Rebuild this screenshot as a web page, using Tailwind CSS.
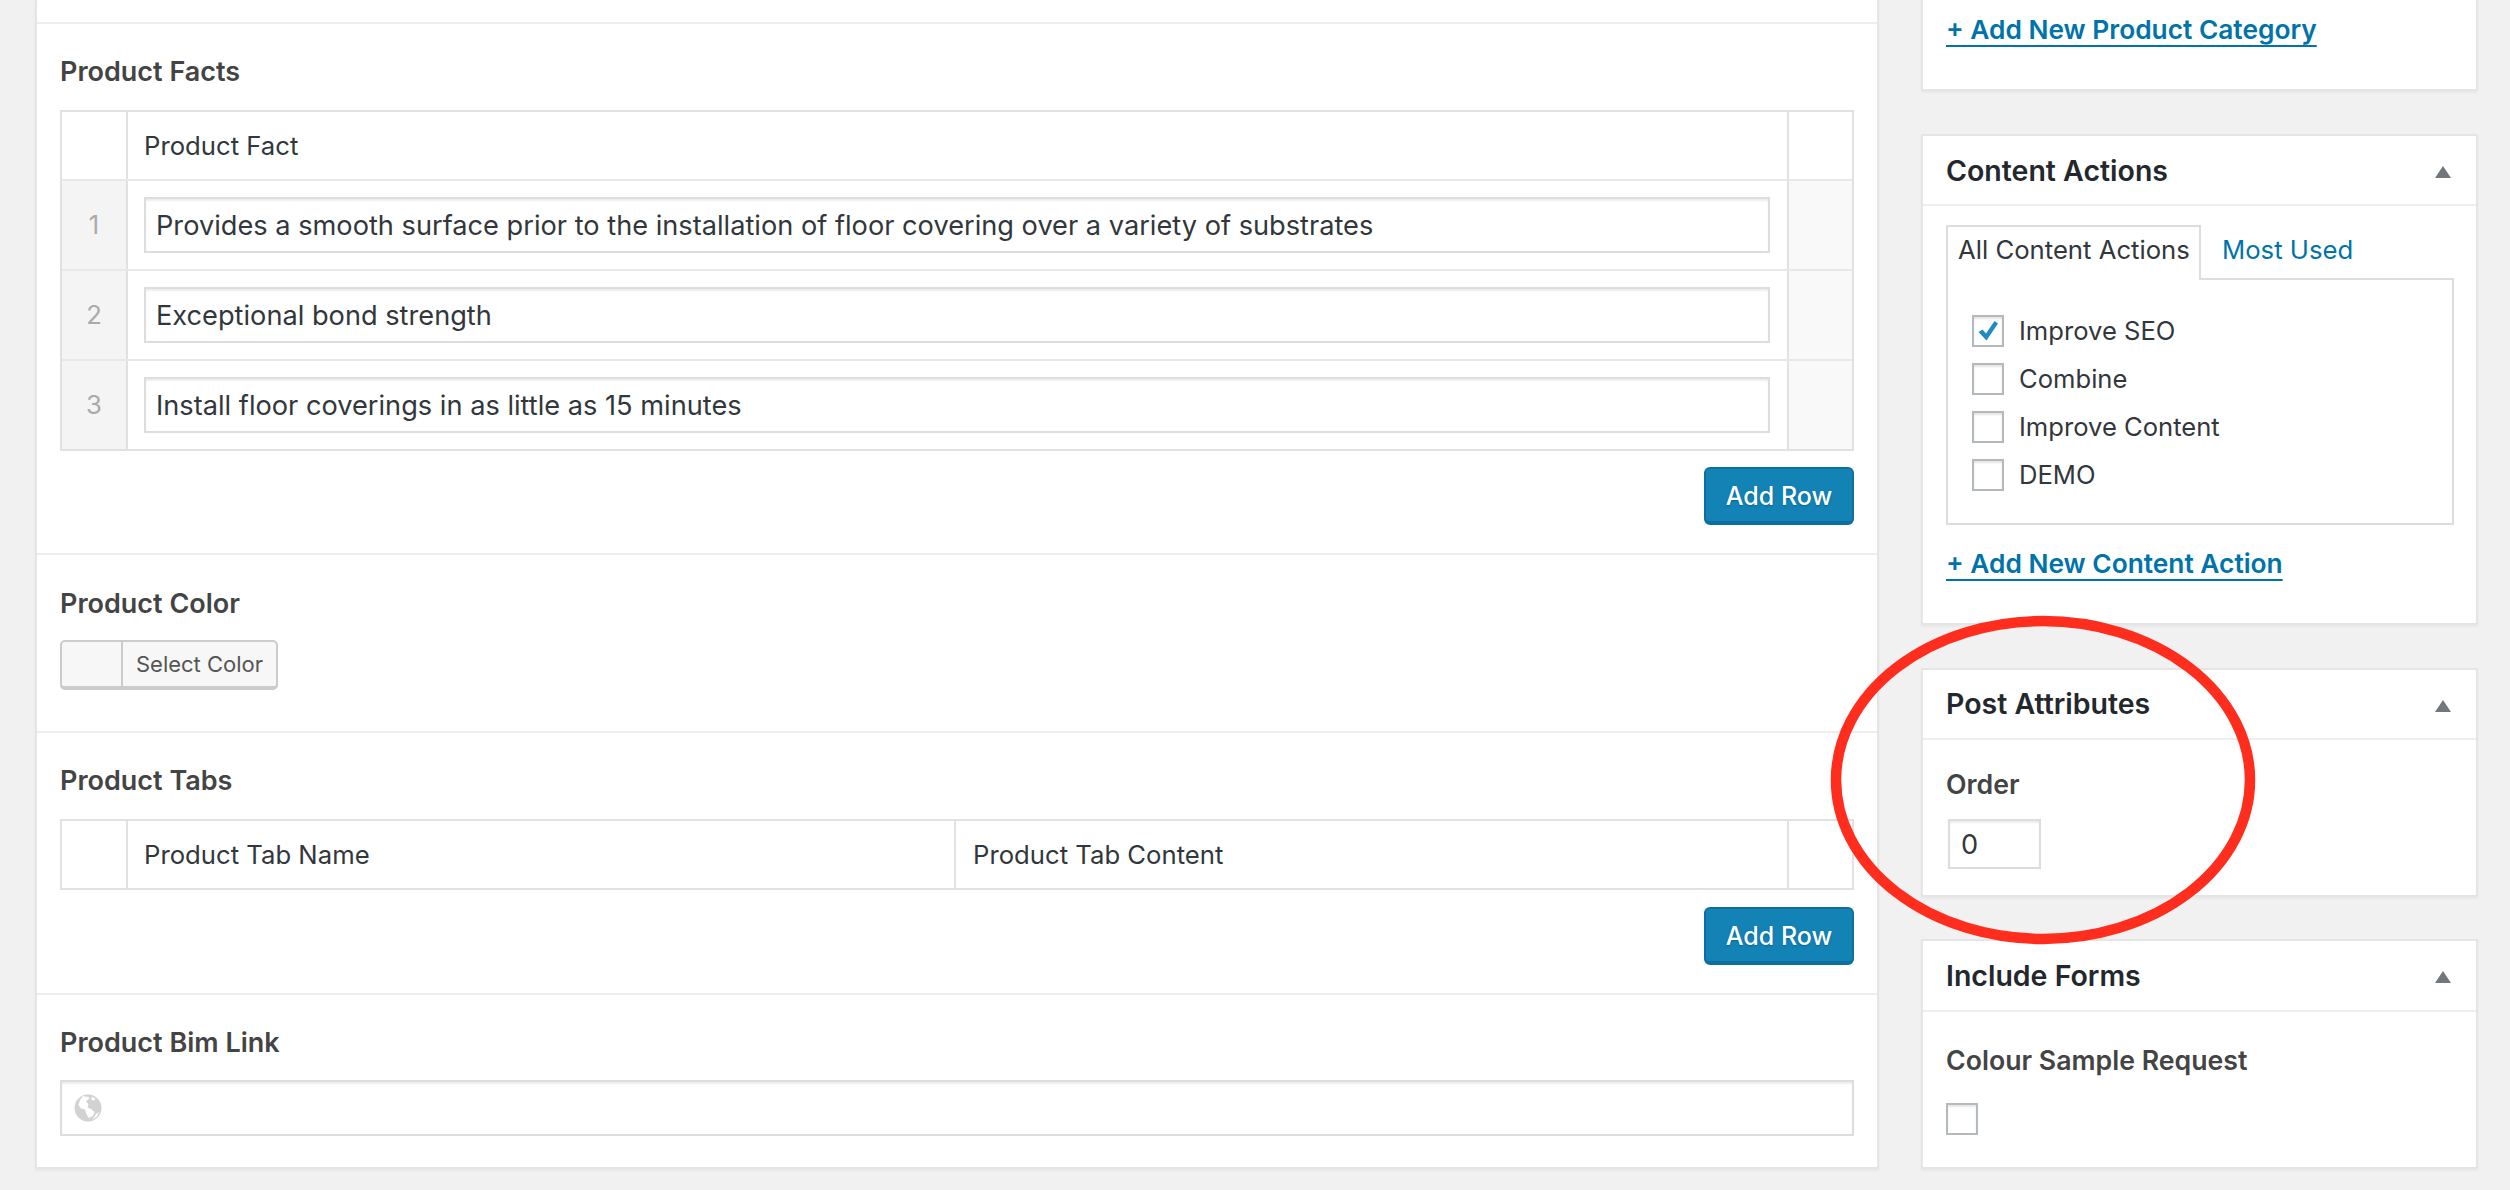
<!DOCTYPE html>
<html lang="en">
<head>
    <meta charset="UTF-8">
    <title>Edit Product</title>
    <script src="https://cdn.jsdelivr.net/npm/@tailwindcss/browser@4"></script>
</head>
<body class="relative h-[1190px] w-[2510px] overflow-hidden bg-[#f1f1f1] font-['Inter',sans-serif] text-[25.700px] leading-[32px] text-[#32373c]">

    <div class="flex items-start pl-[35px]">
        <!-- main column -->
        <main class="w-[1844px] h-[1169px] border-x-2 border-b-2 border-[#e5e5e5] bg-white shadow-[0_2px_2px_rgba(0,0,0,0.04)]">
            <div class="h-[22px]"></div>

            <!-- Product Facts -->
            <section class="h-[531px] border-t-2 border-[#eeeeee] px-[23px] pt-[32px]">
                <h3 class="text-[27px] font-semibold text-[#444]">Product Facts</h3>
                <div class="mt-[22px] border-2 border-[#e1e1e1]">
                    <div class="flex h-[67px]">
                        <div class="w-[66px] border-r-2 border-[#e1e1e1]"></div>
                        <div class="flex flex-1 items-center pl-[16px]">Product Fact</div>
                        <div class="w-[65px] border-l-2 border-[#e1e1e1]"></div>
                    </div>
                    <div class="flex h-[90px] border-t-2 border-[#e8e8e8]">
                        <div class="flex w-[66px] items-center justify-center border-r-2 border-[#e1e1e1] bg-[#f4f4f4] text-[#aaa]">1</div>
                        <div class="flex flex-1 items-center pl-[16px] pr-[17px]"><input class="h-[56px] w-full border-2 border-[#ddd] px-[10px] text-[27.200px] shadow-[inset_0_2px_2px_rgba(0,0,0,0.07)] outline-none" value="Provides a smooth surface prior to the installation of floor covering over a variety of substrates"></div>
                        <div class="w-[65px] border-l-2 border-[#e1e1e1] bg-[#f9f9f9]"></div>
                    </div>
                    <div class="flex h-[90px] border-t-2 border-[#e8e8e8]">
                        <div class="flex w-[66px] items-center justify-center border-r-2 border-[#e1e1e1] bg-[#f4f4f4] text-[#aaa]">2</div>
                        <div class="flex flex-1 items-center pl-[16px] pr-[17px]"><input class="h-[56px] w-full border-2 border-[#ddd] px-[10px] text-[27.200px] shadow-[inset_0_2px_2px_rgba(0,0,0,0.07)] outline-none" value="Exceptional bond strength"></div>
                        <div class="w-[65px] border-l-2 border-[#e1e1e1] bg-[#f9f9f9]"></div>
                    </div>
                    <div class="flex h-[90px] border-t-2 border-[#e8e8e8]">
                        <div class="flex w-[66px] items-center justify-center border-r-2 border-[#e1e1e1] bg-[#f4f4f4] text-[#aaa]">3</div>
                        <div class="flex flex-1 items-center pl-[16px] pr-[17px]"><input class="h-[56px] w-full border-2 border-[#ddd] px-[10px] text-[27.200px] shadow-[inset_0_2px_2px_rgba(0,0,0,0.07)] outline-none" value="Install floor coverings in as little as 15 minutes"></div>
                        <div class="w-[65px] border-l-2 border-[#e1e1e1] bg-[#f9f9f9]"></div>
                    </div>
                </div>
                <div class="mt-[16px] flex justify-end">
                    <button class="h-[58px] w-[150px] rounded-[6px] border-2 border-b-4 border-[#0e6f9f] bg-[#1382b5] pt-[2px] text-[25px] font-medium text-white [text-shadow:0_1px_2px_#006799]">Add Row</button>
                </div>
            </section>

            <!-- Product Color -->
            <section class="h-[178px] border-t-2 border-[#eeeeee] px-[23px] pt-[33px]">
                <h3 class="text-[27px] font-semibold text-[#444]">Product Color</h3>
                <button class="mt-[20px] flex h-[50px] w-[218px] overflow-hidden rounded-[5px] border-2 border-b-4 border-[#cccccc] bg-[#f7f7f7] text-[22px] text-[#555]">
                    <span class="h-full w-[61px] border-r-2 border-[#cccccc]"></span>
                    <span class="flex h-full flex-1 items-center justify-center">Select Color</span>
                </button>
            </section>

            <!-- Product Tabs -->
            <section class="h-[262px] border-t-2 border-[#eeeeee] px-[23px] pt-[32px]">
                <h3 class="text-[27px] font-semibold text-[#444]">Product Tabs</h3>
                <div class="mt-[22px] flex h-[71px] border-2 border-[#e1e1e1]">
                    <div class="w-[66px] border-r-2 border-[#e1e1e1]"></div>
                    <div class="flex w-[826px] items-center pl-[16px]">Product Tab Name</div>
                    <div class="flex flex-1 items-center border-l-2 border-[#e1e1e1] pl-[17px]">Product Tab Content</div>
                    <div class="w-[65px] border-l-2 border-[#e1e1e1]"></div>
                </div>
                <div class="mt-[17px] flex justify-end">
                    <button class="h-[58px] w-[150px] rounded-[6px] border-2 border-b-4 border-[#0e6f9f] bg-[#1382b5] pt-[2px] text-[25px] font-medium text-white [text-shadow:0_1px_2px_#006799]">Add Row</button>
                </div>
            </section>

            <!-- Product Bim Link -->
            <section class="border-t-2 border-[#eeeeee] px-[23px] pt-[32px]">
                <h3 class="text-[27px] font-semibold text-[#444]">Product Bim Link</h3>
                <div class="mt-[21px] flex h-[56px] items-center border-2 border-[#ddd] pl-[12px] shadow-[inset_0_2px_2px_rgba(0,0,0,0.07)]">
                    <svg class="h-[28px] w-[28px]" viewBox="0 0 28 28">
                        <circle cx="14" cy="14" r="13.500" fill="#d2d2d2"/>
                        <path d="M11 2.500l4 .5-.5 2.500-2.500 1.500L14.500 10.500l-1 3 3.500 1.500 3.500 3-1.500 4-4.500 2-2-4-1.500-4.500-4-1-2.500-3.500 1.500-5 3-4z" fill="#fff"/>
                        <path d="M18 2.800l3.500 2-1.800 2-2.700-1.500z" fill="#fff"/>
                        <path d="M22 20l3-2-2 4.500-4.500 3z" fill="#fff"/>
                    </svg>
                </div>
            </section>
        </main>

        <!-- sidebar -->
        <aside class="ml-[42px] flex w-[557px] flex-col gap-[43px]">
            <div class="h-[91px] border-x-2 border-b-2 border-[#e5e5e5] bg-white pl-[23px] pt-[14px] shadow-[0_2px_2px_rgba(0,0,0,0.04)]">
                <a class="text-[26.300px] font-semibold text-[#0073aa] underline underline-offset-[6px]">+ Add New Product Category</a>
            </div>

            <div class="h-[491px] border-2 border-[#e5e5e5] bg-white shadow-[0_2px_2px_rgba(0,0,0,0.04)]">
                <div class="flex h-[70px] items-center justify-between border-b-2 border-[#eeeeee] pl-[23px] pr-[25px]">
                    <h2 class="pt-[2px] text-[28.500px] font-semibold text-[#23282d]">Content Actions</h2>
                    <span class="mt-[3px] h-0 w-0 border-x-[8px] border-b-[12px] border-x-transparent border-b-[#72777c]"></span>
                </div>
                <div class="pl-[23px] pr-[22px] pt-[19px]">
                    <div class="flex">
                        <div class="relative z-10 -mb-[2px] flex h-[55px] w-[255px] items-center border-2 border-b-0 border-[#dddddd] bg-white pb-[8px] pl-[10px]">All Content Actions</div>
                        <div class="flex items-center pb-[4px] pl-[21px] text-[#0073aa]">Most Used</div>
                    </div>
                    <div class="flex h-[247px] flex-col border-2 border-[#dddddd] pl-[24px] pt-[35px] text-[25.600px]">
                        <label class="flex h-[48px] items-start gap-[15px]">
                            <span class="flex h-[32px] w-[32px] items-center justify-center border-2 border-[#b4b9be] shadow-[inset_0_2px_2px_rgba(0,0,0,0.1)]">
                                <svg class="h-[24px] w-[24px]" viewBox="0 0 24 24"><path d="M2.500 13l4-2.500 3.500 4L18.500 2 22 4.500 10.500 21.500z" fill="#1e8cbe"/></svg>
                            </span>Improve SEO
                        </label>
                        <label class="flex h-[48px] items-start gap-[15px]"><span class="h-[32px] w-[32px] border-2 border-[#b4b9be] shadow-[inset_0_2px_2px_rgba(0,0,0,0.1)]"></span>Combine</label>
                        <label class="flex h-[48px] items-start gap-[15px]"><span class="h-[32px] w-[32px] border-2 border-[#b4b9be] shadow-[inset_0_2px_2px_rgba(0,0,0,0.1)]"></span>Improve Content</label>
                        <label class="flex h-[48px] items-start gap-[15px]"><span class="h-[32px] w-[32px] border-2 border-[#b4b9be] shadow-[inset_0_2px_2px_rgba(0,0,0,0.1)]"></span>DEMO</label>
                    </div>
                    <a class="mt-[23px] block w-fit text-[26.300px] font-semibold text-[#0073aa] underline underline-offset-[6px]">+ Add New Content Action</a>
                </div>
            </div>

            <div class="h-[229px] border-2 border-[#e5e5e5] bg-white shadow-[0_2px_2px_rgba(0,0,0,0.04)]">
                <div class="flex h-[70px] items-center justify-between border-b-2 border-[#eeeeee] pl-[23px] pr-[25px]">
                    <h2 class="text-[28.500px] font-semibold text-[#23282d]">Post Attributes</h2>
                    <span class="mt-[3px] h-0 w-0 border-x-[8px] border-b-[12px] border-x-transparent border-b-[#72777c]"></span>
                </div>
                <div class="pl-[23px] pt-[28px]">
                    <p class="text-[26.700px] font-semibold text-[#444]">Order</p>
                    <input class="ml-[2px] mt-[19px] block h-[50px] w-[93px] border-2 border-[#ddd] pl-[11px] text-[27.200px] shadow-[inset_0_2px_2px_rgba(0,0,0,0.07)] outline-none" value="0">
                </div>
            </div>

            <div class="-mt-[1px] h-[230px] border-2 border-[#e5e5e5] bg-white shadow-[0_2px_2px_rgba(0,0,0,0.04)]">
                <div class="flex h-[71px] items-center justify-between border-b-2 border-[#eeeeee] pl-[23px] pr-[25px]">
                    <h2 class="text-[28.500px] font-semibold text-[#23282d]">Include Forms</h2>
                    <span class="mt-[3px] h-0 w-0 border-x-[8px] border-b-[12px] border-x-transparent border-b-[#72777c]"></span>
                </div>
                <div class="pl-[23px] pt-[32px]">
                    <p class="text-[26.700px] font-semibold text-[#444]">Colour Sample Request</p>
                    <span class="mt-[27px] block h-[32px] w-[32px] border-2 border-[#b4b9be] shadow-[inset_0_2px_2px_rgba(0,0,0,0.1)]"></span>
                </div>
            </div>
        </aside>
    </div>

    <!-- red annotation drawn on top of the screenshot -->
    <svg class="pointer-events-none absolute left-[1825px] top-[610px] h-[340px] w-[436px]" viewBox="0 0 436 340">
        <ellipse cx="218" cy="170" rx="207" ry="159" fill="none" stroke="#ff2d1e" stroke-width="10.500"/>
    </svg>
</body>
</html>
